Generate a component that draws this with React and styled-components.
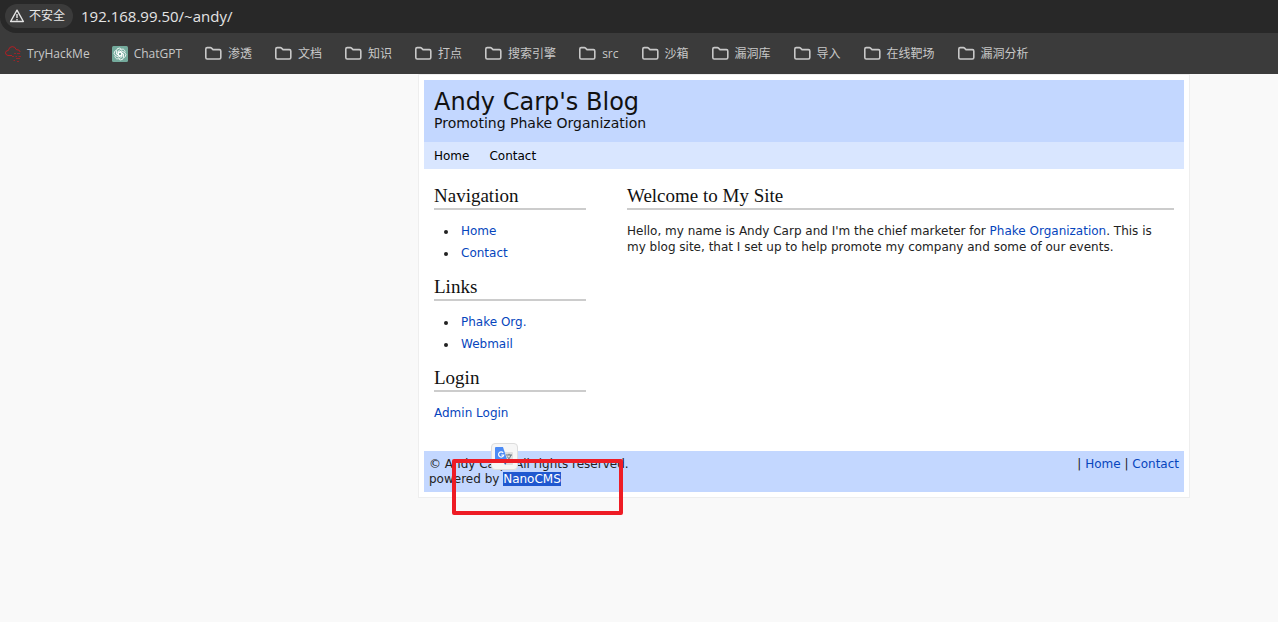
import React from "react";
import styled, { createGlobalStyle } from "styled-components";

const GlobalStyle = createGlobalStyle`
  * { box-sizing: border-box; }
  body {
    margin: 0;
    background: #f9f9f9;
    color: #222;
    font: 12px/16px Verdana, "DejaVu Sans", sans-serif;
  }
`;

const Page = styled.div`
  min-height: 100vh;
`;

const Browser = styled.header`
  height: 74px;
  background: #3b3b3b;
  font-family: "Open Sans", "Noto Sans CJK SC", sans-serif;
`;

const AddressBar = styled.div`
  display: flex;
  align-items: center;
  gap: 8px;
  height: 33px;
  padding: 0 5px 1px;
  background: #282828;
  border-bottom-left-radius: 16px;
`;

const Security = styled.button`
  display: flex;
  align-items: center;
  gap: 4px;
  height: 24px;
  padding: 0 8px 0 4px;
  border: 0;
  border-radius: 12px;
  background: #3b3b3b;
  color: #e8e8e8;
  font: 12px/16px "Open Sans", "Noto Sans CJK SC", sans-serif;
  white-space: nowrap;
`;

const Address = styled.input`
  flex: 1;
  min-width: 0;
  padding: 0;
  border: 0;
  outline: 0;
  background: transparent;
  color: #e4e4e4;
  font: 15px/20px "Open Sans", sans-serif;
`;

const Bookmarks = styled.nav`
  display: flex;
  align-items: center;
  gap: 22px;
  height: 41px;
  padding: 0 5px;
  overflow: hidden;
`;

const Bookmark = styled.a`
  display: flex;
  align-items: center;
  gap: 6px;
  flex: none;
  color: #c8c8c8;
  font-size: 12px;
  line-height: 20px;
  text-decoration: none;
`;

const Viewport = styled.div`
  display: grid;
  grid-template-columns: 418fr minmax(auto, 772px) 88fr;
`;

const Card = styled.div`
  grid-column: 2;
  padding: 5px;
  border: 1px solid #eee;
  background: #fff;
`;

const Banner = styled.div`
  padding: 10px 10px 11px;
  background: #c3d7ff;
  color: #111;
`;

const SiteTitle = styled.h1`
  margin: 0;
  font-size: 24px;
  line-height: 25px;
  font-weight: 400;
`;

const Tagline = styled.p`
  margin: 0;
  font-size: 14px;
  line-height: 16px;
`;

const Menu = styled.nav`
  display: flex;
  gap: 20px;
  padding: 6px 10px 5px;
  background: #d9e6ff;
`;

const MenuLink = styled.a`
  color: #000;
  text-decoration: none;
`;

const Columns = styled.div`
  display: grid;
  grid-template-columns: 152px 1fr;
  gap: 41px;
  padding: 13px 10px 30px;
`;

const Heading = styled.h2`
  margin: 0;
  padding-top: 2px;
  border-bottom: 2px solid #ccc;
  color: #111;
  font: 400 19px/24px Georgia, "Liberation Serif", serif;
`;

const LinkList = styled.ul`
  margin: 10px 0 9px;
  padding-left: 24px;
  line-height: 22px;

  li {
    padding-left: 3px;
  }
`;

const Paragraph = styled.p`
  margin: 13px 0 0;
`;

const Link = styled.a`
  color: #0645bd;
  text-decoration: none;
`;

const Footer = styled.footer`
  position: relative;
  display: flex;
  justify-content: space-between;
  padding: 6px 5px 5px;
  background: #c3d7ff;
  line-height: 15px;
`;

const Selected = styled.a`
  background: #2058cf;
  color: #fff;
  text-decoration: none;
`;

const Translate = styled.button`
  position: absolute;
  left: 67px;
  top: -8px;
  width: 27px;
  height: 27px;
  padding: 3px;
  border: 1px solid #ddd;
  border-radius: 4px;
  background: #f6f6f6;
`;

const Marker = styled.div`
  position: absolute;
  left: 28px;
  top: 8px;
  width: 171px;
  height: 56px;
  border: 4px solid #ee1c25;
  border-radius: 2px;
  pointer-events: none;
`;

const Icon = styled.svg`
  display: block;
  flex: none;
`;

const FolderIcon = () => (
  <Icon width="18" height="18" viewBox="0 0 18 18" fill="none" stroke="#c8c8c8" strokeWidth="1.6">
    <path d="M1.8 4Q1.8 2.6 3.2 2.6H6.4Q7 2.6 7.5 3.1L9 4.6H15.4Q16.8 4.6 16.8 6V12.6Q16.8 14 15.4 14H3.2Q1.8 14 1.8 12.6Z" />
  </Icon>
);

const WarningIcon = () => (
  <Icon width="16" height="16" viewBox="0 0 16 16" fill="none" stroke="#e4e4e4" strokeWidth="1.4" strokeLinejoin="round">
    <path d="M8 2.2 14.4 13.5H1.6Z" />
    <path d="M8 6V10M8 11V12.4" />
  </Icon>
);

const CloudIcon = () => (
  <Icon width="16" height="16" viewBox="0 0 16 16" fill="none" stroke="#b51f24" strokeWidth="1">
    <path d="M7 9.5H3Q.5 9 .5 6.8 .7 4.5 3.3 4.5 4 .7 7.2.6 10.3.6 11.2 3.6 14.6 3.3 15.2 6" />
    <path d="M9 7.5H11M12 7.5H15M7 10.5H9M10.5 10.5H12M13.5 10.5H16M11 12.5H15M8.5 14.5H10M12 15.5H14" strokeWidth="1.2" opacity=".75" />
  </Icon>
);

const KnotIcon = () => (
  <Icon width="16" height="16" viewBox="0 0 16 16" fill="none" stroke="#fff" strokeWidth=".8">
    <rect width="16" height="16" rx="1.5" fill="#74aa9c" stroke="none" />
    {[0, 60, 120, 180, 240, 300].map((angle) => (
      <path key={angle} transform={`rotate(${angle} 8 8)`} d="M6.2 9V5L9 3.3Q11.6 2.2 12.9 4.7 13.2 5.6 13 6.4M6.2 6.9 8 5.9 11.2 7.8" />
    ))}
  </Icon>
);

const TranslateIcon = () => (
  <Icon width="19" height="19" viewBox="0 0 19 19" fill="none">
    <path d="M8 5H17Q18 5 18 6V17Q18 18 17 18H11Z" fill="#dedede" />
    <path d="M1 0H8L12.5 14H1Q0 14 0 13V1Q0 0 1 0Z" fill="#4c8bf5" />
    <path d="M8 14H12.5L10.2 18Z" fill="#3459a6" />
    <path d="M8.2 5.8A2.6 2.6 0 1 0 8.7 8H6.2" stroke="#fff" strokeWidth="1.2" />
    <path d="M11 8H17M14 6.8V8M16 8Q15 11.5 12.5 13M12.3 9.5Q13.5 12 16 13.2" stroke="#687883" />
  </Icon>
);

const folders = ["渗透", "文档", "知识", "打点", "搜索引擎", "src", "沙箱", "漏洞库", "导入", "在线靶场", "漏洞分析"];

export default function App() {
  return (
    <Page>
      <GlobalStyle />
      <Browser>
        <AddressBar>
          <Security><WarningIcon />不安全</Security>
          <Address aria-label="Address" defaultValue="192.168.99.50/~andy/" />
        </AddressBar>
        <Bookmarks aria-label="Bookmarks">
          <Bookmark href="#"><CloudIcon />TryHackMe</Bookmark>
          <Bookmark href="#"><KnotIcon />ChatGPT</Bookmark>
          {folders.map((name) => (
            <Bookmark href="#" key={name}><FolderIcon />{name}</Bookmark>
          ))}
        </Bookmarks>
      </Browser>
      <Viewport>
        <Card>
          <Banner>
            <SiteTitle>Andy Carp's Blog</SiteTitle>
            <Tagline>Promoting Phake Organization</Tagline>
          </Banner>
          <Menu aria-label="Site">
            <MenuLink href="#">Home</MenuLink>
            <MenuLink href="#">Contact</MenuLink>
          </Menu>
          <Columns>
            <aside>
              <Heading>Navigation</Heading>
              <LinkList>
                <li><Link href="#">Home</Link></li>
                <li><Link href="#">Contact</Link></li>
              </LinkList>
              <Heading>Links</Heading>
              <LinkList>
                <li><Link href="#">Phake Org.</Link></li>
                <li><Link href="#">Webmail</Link></li>
              </LinkList>
              <Heading>Login</Heading>
              <Paragraph><Link href="#">Admin Login</Link></Paragraph>
            </aside>
            <main>
              <Heading>Welcome to My Site</Heading>
              <Paragraph>
                Hello, my name is Andy Carp and I'm the chief marketer for <Link href="#">Phake Organization</Link>. This is my blog site, that I set up to help promote my company and some of our events.
              </Paragraph>
            </main>
          </Columns>
          <Footer>
            <div>
              © Andy Carp. All rights reserved.<br />
              powered by <Selected href="#">NanoCMS</Selected>
            </div>
            <div>| <Link href="#">Home</Link> | <Link href="#">Contact</Link></div>
            <Translate aria-label="Translate"><TranslateIcon /></Translate>
            <Marker />
          </Footer>
        </Card>
      </Viewport>
    </Page>
  );
}
